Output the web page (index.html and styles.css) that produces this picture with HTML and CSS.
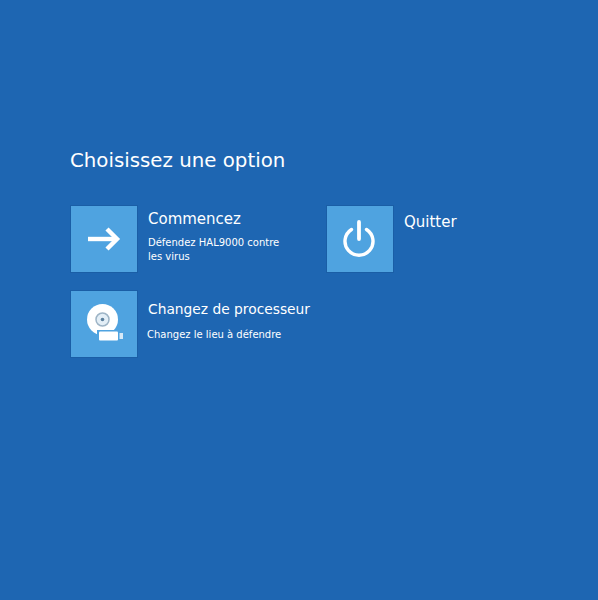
FILE: index.html
```html
<!DOCTYPE html>
<html lang="fr">
<head>
    <meta charset="UTF-8">
    <meta name="viewport" content="width=device-width, initial-scale=1.0">
    <title>Choisissez une option</title>
    <link rel="stylesheet" href="styles.css">
</head>
<body>
    <h1>Choisissez une option</h1>
    <div class="options">
        <div class="option">
            <div class="tile">
                <svg width="36" height="26" viewBox="0 0 36 26" fill="none" stroke="#fff" stroke-width="4.4">
                    <path d="M2 13H31"/>
                    <path d="M21 3L31 13L21 23"/>
                </svg>
            </div>
            <div class="label">
                <h2>Commencez</h2>
                <p>Défendez HAL9000 contre les virus</p>
            </div>
        </div>
        <div class="option">
            <div class="tile">
                <svg width="36" height="40" viewBox="0 0 36 40" fill="none" stroke="#fff" stroke-width="3.4">
                    <path d="M9.500 10.500A14 14 0 1 0 24.500 10.500" stroke-linecap="round"/>
                    <path d="M17 3V20" stroke-width="3.8" stroke-linecap="round"/>
                </svg>
            </div>
            <div class="label quit">
                <h2>Quitter</h2>
            </div>
        </div>
        <div class="option">
            <div class="tile">
                <svg width="43" height="42" viewBox="0 0 43 42">
                    <circle cx="19.500" cy="16.500" r="15.500" fill="#fff"/>
                    <circle cx="19.500" cy="16.500" r="6.500" fill="#e3eef6" stroke="#9db4c6" stroke-width="1.500"/>
                    <circle cx="19.500" cy="16.500" r="1.800" fill="#5b7f9c"/>
                    <rect x="14" y="27" width="28" height="12" fill="#4fa3e0"/>
                    <rect x="16" y="28.500" width="19" height="9" rx="1" fill="#fff"/>
                    <rect x="36.500" y="30" width="3.500" height="6" fill="#d6e9f7"/>
                </svg>
            </div>
            <div class="label change">
                <h2>Changez de processeur</h2>
                <p>Changez le lieu à défendre</p>
            </div>
        </div>
    </div>
</body>
</html>
```

FILE: styles.css
```css
body {
    margin: 0;
    height: 600px;
    overflow: hidden;
    box-sizing: border-box;
    padding: 149px 0 0 70px;
    background-color: #1e66b2;
    color: #ffffff;
    font-family: 'DejaVu Sans', sans-serif;
}

h1 {
    margin: 0 0 33px 0;
    font-size: 19.8px;
    line-height: 23px;
    font-weight: normal;
}

.options {
    display: grid;
    grid-template-columns: 256px 180px;
    row-gap: 17px;
}

.option {
    display: flex;
    gap: 10px;
}

.tile {
    width: 66px;
    height: 66px;
    flex-shrink: 0;
    display: flex;
    align-items: center;
    justify-content: center;
    background-color: #4fa3e0;
    border: 1px solid #1a5ea6;
}

.label h2 {
    margin: 4px 0 0 0;
    font-size: 15px;
    line-height: 20px;
    font-weight: normal;
    white-space: nowrap;
}

.label p {
    margin: 7px 0 0 0;
    width: 140px;
    font-size: 10px;
    line-height: 14px;
}

.quit h2 {
    margin-top: 7px;
}

.change h2 {
    margin-top: 9px;
    font-size: 13.8px;
}

.change p {
    width: auto;
    margin: 9px 0 0 -1px;
}
```
